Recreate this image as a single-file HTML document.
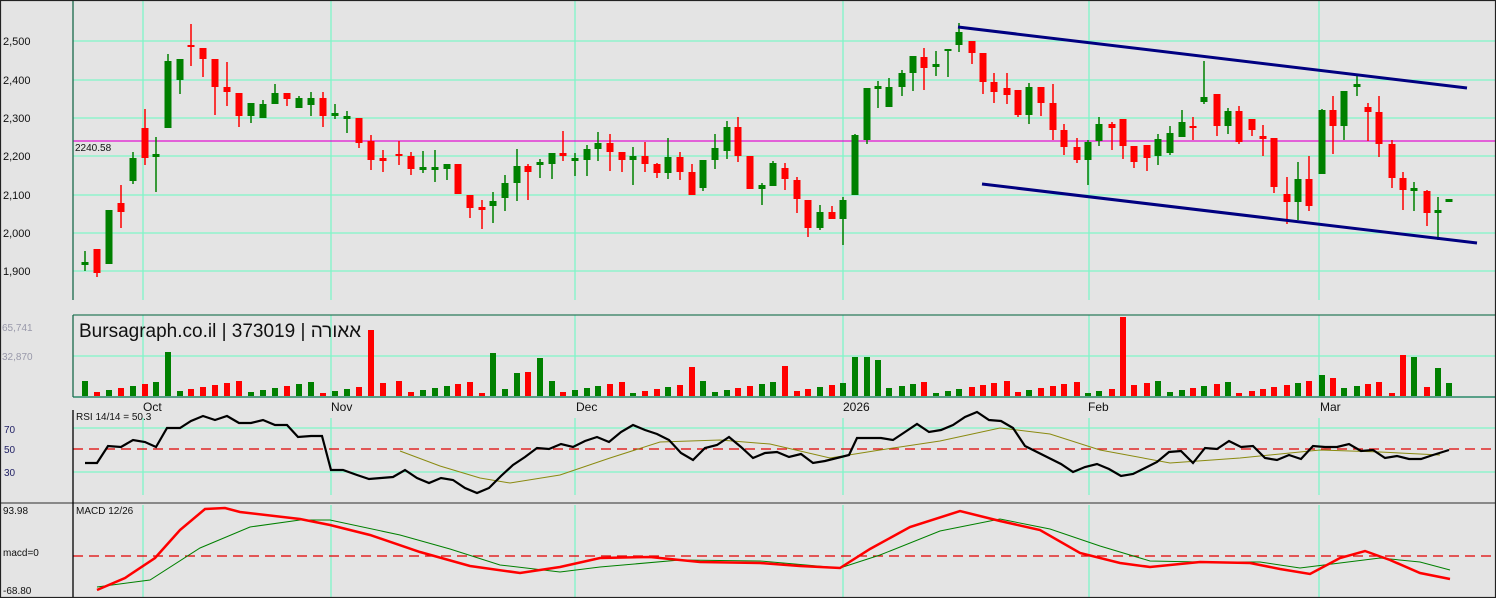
<!DOCTYPE html>
<html><head><meta charset="utf-8"><style>
html,body{margin:0;padding:0;background:#e4e4e4;width:1496px;height:598px;overflow:hidden}
svg{display:block}
text{font-family:"Liberation Sans","Noto Sans CJK JP",sans-serif}
</style></head><body>
<svg id="s" width="1496" height="598" xmlns="http://www.w3.org/2000/svg">
<rect width="1496" height="598" fill="#e4e4e4"/>
<g id="grid" stroke="#7ff5c8" stroke-width="1.3"></g>
<line x1="73" y1="141" x2="1496" y2="141" stroke="#e010d0" stroke-width="1.3"/>
<g id="candles"></g>
<line x1="958" y1="27" x2="1467" y2="88" stroke="#000080" stroke-width="3"/>
<line x1="982" y1="184" x2="1477" y2="243" stroke="#000080" stroke-width="3"/>
<line x1="73" y1="315" x2="1496" y2="315" stroke="#2a7a5a" stroke-width="1.3"/>
<line x1="73" y1="397" x2="1496" y2="397" stroke="#2a8a6a" stroke-width="1.5"/>
<g id="vol"></g>
<line x1="73" y1="449" x2="1496" y2="449" stroke="#e00000" stroke-dasharray="10,6" stroke-width="1.2"/>
<line x1="73" y1="556" x2="1496" y2="556" stroke="#e00000" stroke-dasharray="10,6" stroke-width="1.2"/>
<polyline id="rsis" fill="none" stroke="#8a8a10" stroke-width="1"/>
<polyline id="rsi" fill="none" stroke="#000" stroke-width="2.2"/>
<polyline id="mg" fill="none" stroke="#008000" stroke-width="1"/>
<polyline id="mr" fill="none" stroke="#ff0000" stroke-width="2.5"/>
<line x1="0" y1="503" x2="1496" y2="503" stroke="#888" stroke-width="2"/>
<line x1="73" y1="0" x2="73" y2="300" stroke="#1a6a4a" stroke-width="1.3"/>
<line x1="73" y1="315" x2="73" y2="397" stroke="#1a6a4a" stroke-width="1.3"/>
<line x1="73" y1="410" x2="73" y2="598" stroke="#000" stroke-width="1.3"/>
<rect x="0.5" y="0.5" width="1495" height="597" fill="none" stroke="#222" stroke-width="1.2"/>
<g font-size="11" fill="#111">
<text x="3" y="45">2,500</text><text x="3" y="84">2,400</text><text x="3" y="122">2,300</text>
<text x="3" y="160">2,200</text><text x="3" y="199">2,100</text><text x="3" y="237">2,000</text><text x="3" y="275">1,900</text>
<text x="75" y="151" fill="#111" font-size="10">2240.58</text>
<text x="2" y="331" fill="#99a" font-size="10">65,741</text><text x="2" y="360" fill="#99a" font-size="10">32,870</text>
<text x="4" y="433" font-size="10" fill="#226">70</text><text x="4" y="453" font-size="10" fill="#226">50</text><text x="4" y="476" font-size="10" fill="#226">30</text>
<text x="76" y="420" font-size="10">RSI 14/14 = 50.3</text>
<text x="76" y="514" font-size="10">MACD 12/26</text>
<text x="3" y="514" font-size="10">93.98</text><text x="3" y="556" font-size="10">macd=0</text><text x="3" y="594" font-size="10">-68.80</text>
<text x="143" y="411" font-size="12">Oct</text><text x="331" y="411" font-size="12">Nov</text><text x="576" y="411" font-size="12">Dec</text>
<text x="843" y="411" font-size="12">2026</text><text x="1088" y="411" font-size="12">Feb</text><text x="1320" y="411" font-size="12">Mar</text>
</g>
<text x="79" y="337" font-size="19" fill="#111">Bursagraph.co.il | 373019 | אאורה</text>
</svg>
<script>
var NS="http://www.w3.org/2000/svg";
function el(p,t,a){var e=document.createElementNS(NS,t);for(var k in a)e.setAttribute(k,a[k]);document.getElementById(p).appendChild(e);return e;}
[41,80,118,156,195,233,271].forEach(function(y){el("grid","line",{x1:73,y1:y,x2:1496,y2:y});});
[356].forEach(function(y){el("grid","line",{x1:73,y1:y,x2:1496,y2:y});});
[428,472].forEach(function(y){el("grid","line",{x1:73,y1:y,x2:1496,y2:y});});
[143,331,575,843,1089,1319].forEach(function(x){
 el("grid","line",{x1:x,y1:0,x2:x,y2:300});el("grid","line",{x1:x,y1:315,x2:x,y2:397});
 el("grid","line",{x1:x,y1:418,x2:x,y2:495});el("grid","line",{x1:x,y1:505,x2:x,y2:598});});
var C=[[85,265,262,251,271],[97,249,273,249,277],[109,264,210,210,264],[121,203,212,185,228],[133,181,158,152,184],[145,128,158,109,165],[156,157,154,137,192],[168,128,61,54,128],[180,80,59,59,94],[191,45,47,24,66],[203,48,59,48,77],[215,59,87,59,115],[227,87,92,62,106],[239,93,116,93,127],[251,116,103,103,123],[263,118,104,100,118],[275,104,93,84,104],[287,93,99,93,106],[299,108,98,96,108],[311,105,98,92,116],[323,98,116,92,127],[335,116,113,104,119],[347,118,117,111,133],[359,118,143,118,148],[371,141,160,135,170],[383,159,160,150,172],[399,154,156,141,165],[411,156,169,152,175],[423,169,168,151,173],[435,169,168,150,182],[447,169,164,164,180],[458,164,194,164,194],[470,195,208,195,218],[482,208,209,200,229],[493,206,201,192,223],[505,198,183,175,211],[517,183,166,149,201],[528,166,172,164,200],[540,164,163,159,178],[552,164,153,153,179],[563,153,156,131,161],[575,160,159,153,176],[587,160,149,145,176],[598,149,143,132,161],[610,143,152,134,171],[622,152,160,152,172],[633,160,156,147,185],[645,156,164,142,172],[657,164,173,163,178],[668,173,157,138,179],[680,157,172,152,180],[692,172,195,164,195],[703,188,160,160,191],[715,160,148,134,169],[727,151,127,121,159],[738,127,156,117,162],[750,156,189,156,189],[762,189,185,183,205],[773,186,163,161,186],[785,168,179,163,190],[797,180,199,177,213],[808,200,228,200,237],[820,228,212,205,230],[832,212,219,206,219],[843,219,200,197,245],[855,195,135,134,195],[867,140,88,88,144],[878,88,87,81,108],[889,107,87,78,107],[902,87,73,70,96],[913,73,56,56,91],[924,57,68,48,90],[936,67,64,51,76],[948,51,49,49,77],[959,45,32,23,52],[972,41,53,41,64],[983,53,82,53,94],[994,82,92,73,103],[1007,88,95,73,104],[1018,90,115,90,117],[1029,115,87,83,124],[1041,87,103,87,116],[1053,103,130,84,140],[1064,130,147,124,155],[1077,147,160,138,163],[1088,160,142,140,185],[1099,141,124,117,146],[1112,124,128,122,150],[1123,119,146,119,159],[1134,146,162,146,168],[1147,145,158,145,171],[1158,156,139,134,165],[1170,153,133,126,155],[1182,137,122,110,137],[1193,126,128,117,140],[1204,102,97,61,104],[1217,94,126,94,136],[1228,126,111,108,134],[1239,111,142,106,144],[1252,119,130,119,136],[1263,137,138,125,156],[1274,138,187,138,193],[1287,194,202,177,224],[1298,202,179,162,220],[1309,179,206,156,211],[1322,174,110,109,174],[1333,110,126,96,154],[1344,126,91,91,140],[1357,86,85,76,96],[1368,107,112,103,141],[1379,112,144,96,157],[1392,144,178,140,188],[1403,178,190,172,210],[1414,190,189,182,211],[1427,191,213,190,226],[1438,212,211,197,240],[1449,201,200,199,202]];
var big={168:352,376:330,371:330,493:353,540:358,689:367,692:367,785:366,855:357,867:357,878:360,1123:317,1403:355,1414:357,1438:368,517:373,528:372,1322:375,1333:378};
C.forEach(function(c,i){
 var x=c[0],o=c[1],cl=c[2],h=c[3],l=c[4];var red=cl>o;var col=red?"#ff0000":"#008000";
 el("candles","line",{x1:x,y1:h,x2:x,y2:l,stroke:col,"stroke-width":1.5});
 var t=Math.min(o,cl),b=Math.max(o,cl);if(b-t<2){t-=1;b+=1;}
 el("candles","rect",{x:x-3.5,y:t,width:7,height:b-t,fill:col});
 var vt=big[x]||(381+((i*37)%13));
 el("vol","rect",{x:x-3,y:vt,width:6,height:396-vt,fill:col});
});
function pl(id,a){document.getElementById(id).setAttribute("points",a.join(" "));}
pl("rsi",["85,463","97,463","108,446","121,447","133,440","145,442","156,447","167,428","180,428","191,421","203,416","215,420","227,416","239,423","251,423","263,420","275,425","287,425","298,437","311,436","322,436","331,470","343,470","357,475","369,479","381,478","393,477","405,470","417,478","429,483","441,478","453,480","465,488","477,493","489,488","501,476","513,465","525,457","537,448","549,449","561,444","573,447","585,441","597,437","609,442","621,432","633,425","645,430","657,434","669,440","681,453","693,460","705,448","717,445","729,437","741,447","753,458","765,453","777,452","789,457","801,454","813,463","825,461","837,458","849,455","857,438","869,438","881,438","893,440","905,432","917,424","929,432","941,430","953,425","965,417","977,412","989,420","1001,421","1013,428","1025,446","1037,452","1049,458","1061,464","1073,472","1085,467","1097,464","1109,469","1121,476","1133,474","1145,468","1157,462","1169,452","1181,451","1193,463","1205,448","1217,449","1229,441","1241,447","1253,446","1265,458","1277,460","1289,455","1301,459","1313,446","1325,447","1337,447","1349,444","1361,451","1373,450","1385,458","1397,456","1409,459","1421,459","1433,455","1449,450"]);
pl("rsis",["400,451","440,466","480,478","510,483","560,475","610,458","660,442","720,440","770,444","830,458","880,450","940,441","1000,428","1050,434","1100,450","1170,463","1240,458","1320,450","1380,452","1440,455"]);
pl("mr",["97,590","125,578","155,558","180,530","205,509","225,508","240,512","300,519","330,525","370,535","420,552","470,566","520,573","560,567","600,558","650,557","700,562","760,563","800,566","840,568","870,549","910,527","960,511","1000,521","1040,530","1080,553","1120,563","1150,567","1200,562","1250,563","1280,569","1310,574","1340,558","1365,551","1390,560","1420,573","1450,579"]);
pl("mg",["97,587","150,580","200,548","250,527","300,520","330,520","400,535","450,549","500,565","560,572","600,567","680,560","760,561","840,568","880,555","940,531","1000,519","1050,529","1100,546","1150,561","1200,562","1260,562","1300,568","1340,563","1380,558","1420,562","1450,570"]);
</script>
</body></html>
